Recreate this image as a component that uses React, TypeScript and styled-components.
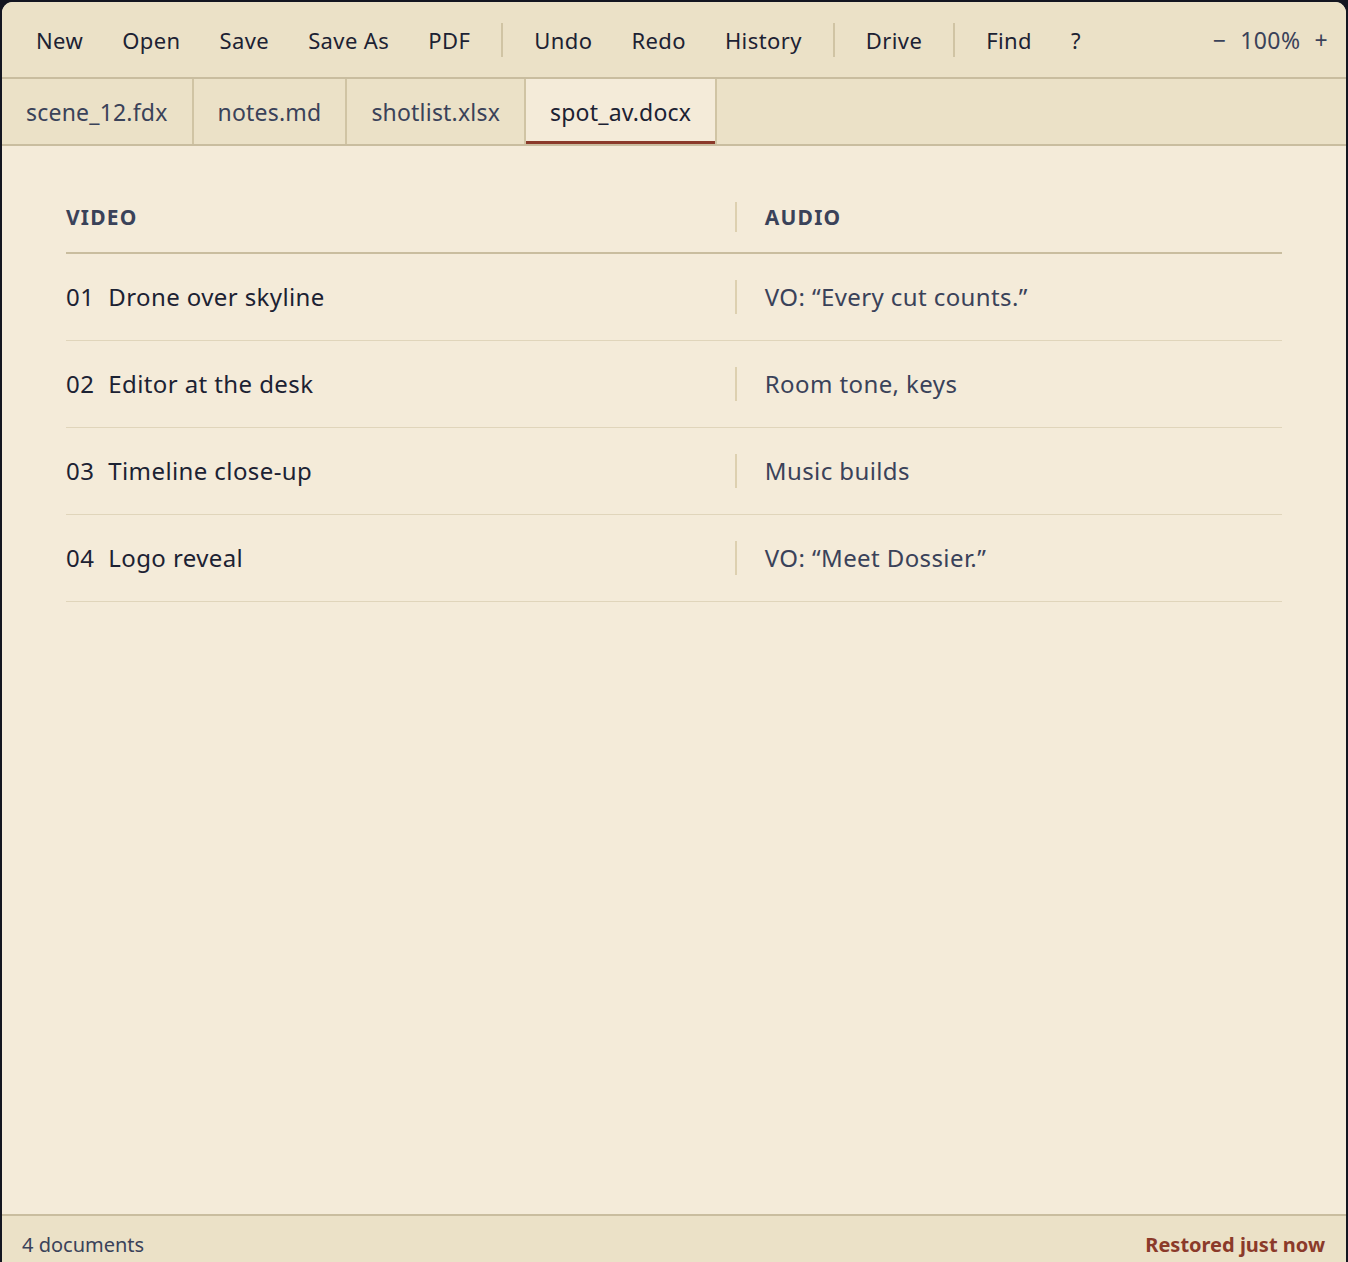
import React from "react";
import styled, { createGlobalStyle } from "styled-components";

const GlobalStyle = createGlobalStyle`
  html, body {
    margin: 0;
    padding: 0;
    background: #131520;
  }
  body {
    font-family: "Noto Sans", "Open Sans", sans-serif;
    -webkit-font-smoothing: antialiased;
  }
  * {
    box-sizing: border-box;
  }
`;

const Page = styled.div`
  padding: 2px 2px 0 2px;
  height: 1262px;
  overflow: hidden;
`;

const Window = styled.div`
  display: flex;
  flex-direction: column;
  height: 1270px;
  background: #f4ebd9;
  border-radius: 11px 11px 0 0;
  overflow: hidden;
`;

const Toolbar = styled.div`
  display: flex;
  align-items: center;
  height: 77px;
  padding: 0 18px 0 22px;
  gap: 15px;
  background: #ebe1c7;
  border-bottom: 2px solid #c9bd9f;
`;

const ToolButton = styled.button`
  padding: 0 12px;
  border: 0;
  background: none;
  font: inherit;
  font-size: 22px;
  letter-spacing: 0.4px;
  color: #1c2233;
  cursor: pointer;
`;

const Separator = styled.div`
  width: 2px;
  height: 34px;
  margin: 0 4px;
  background: #d0c4a4;
`;

const Zoom = styled.div`
  margin-left: auto;
  display: flex;
  align-items: center;
  gap: 14px;
  font-size: 23px;
  letter-spacing: 0.4px;
  color: #3a4259;
`;

const TabBar = styled.div`
  display: flex;
  height: 67px;
  background: #ebe1c7;
  border-bottom: 2px solid #c9bd9f;
`;

const Tab = styled.div<{ $active?: boolean }>`
  display: flex;
  align-items: center;
  padding: 0 24px;
  font-size: 23px;
  letter-spacing: 0.2px;
  color: ${(p) => (p.$active ? "#1c2233" : "#3a4259")};
  background: ${(p) => (p.$active ? "#f4ebd9" : "transparent")};
  border-right: 2px solid #d0c4a4;
  box-shadow: ${(p) => (p.$active ? "inset 0 -3px 0 #8b3a2a" : "none")};
`;

const Content = styled.main`
  flex: 1;
  padding: 56px 64px 0 64px;
`;

const Table = styled.div`
  display: grid;
  grid-template-columns: 55% 45%;
`;

const HeadCell = styled.div<{ $right?: boolean }>`
  height: 52px;
  line-height: 30px;
  padding: 0 0 20px ${(p) => (p.$right ? "30px" : "0")};
  font-size: 21px;
  font-weight: 700;
  letter-spacing: 1.2px;
  color: #3a4259;
  border-bottom: 2px solid #c9bd9f;
  position: relative;

  &::before {
    content: ${(p) => (p.$right ? "''" : "none")};
    position: absolute;
    left: 0;
    top: 0;
    width: 2px;
    height: 30px;
    background: #ddd0b0;
  }
`;

const Cell = styled.div<{ $right?: boolean }>`
  padding: 26px 0 26px ${(p) => (p.$right ? "30px" : "0")};
  line-height: 34px;
  font-size: 24px;
  letter-spacing: 0.4px;
  color: ${(p) => (p.$right ? "#3a4259" : "#1c2233")};
  border-bottom: 1px solid #e0d5bb;
  position: relative;

  &::before {
    content: ${(p) => (p.$right ? "''" : "none")};
    position: absolute;
    left: 0;
    top: 26px;
    width: 2px;
    height: 34px;
    background: #ddd0b0;
  }
`;

const Num = styled.span`
  margin-right: 14px;
`;

const Footer = styled.footer`
  display: flex;
  justify-content: space-between;
  align-items: flex-start;
  height: 58px;
  padding: 15px 21px 0 20px;
  font-size: 20px;
  color: #3a4259;
  background: #ebe1c7;
  border-top: 2px solid #c9bd9f;
`;

const Status = styled.span`
  font-weight: 700;
  color: #8b3a2a;
`;

const groups = [
  ["New", "Open", "Save", "Save As", "PDF"],
  ["Undo", "Redo", "History"],
  ["Drive"],
  ["Find", "?"],
];

const tabs = ["scene_12.fdx", "notes.md", "shotlist.xlsx", "spot_av.docx"];

const rows = [
  ["01", "Drone over skyline", "VO: \u201cEvery cut counts.\u201d"],
  ["02", "Editor at the desk", "Room tone, keys"],
  ["03", "Timeline close-up", "Music builds"],
  ["04", "Logo reveal", "VO: \u201cMeet Dossier.\u201d"],
];

export default function App() {
  return (
    <>
      <GlobalStyle />
      <Page>
        <Window>
          <Toolbar>
            {groups.map((g, i) => (
              <React.Fragment key={i}>
                {i > 0 && <Separator />}
                {g.map((label) => (
                  <ToolButton key={label}>{label}</ToolButton>
                ))}
              </React.Fragment>
            ))}
            <Zoom>
              <span>&minus;</span>
              <span>100%</span>
              <span>+</span>
            </Zoom>
          </Toolbar>
          <TabBar>
            {tabs.map((t) => (
              <Tab key={t} $active={t === "spot_av.docx"}>
                {t}
              </Tab>
            ))}
          </TabBar>
          <Content>
            <Table>
              <HeadCell>VIDEO</HeadCell>
              <HeadCell $right>AUDIO</HeadCell>
              {rows.map(([n, video, audio]) => (
                <React.Fragment key={n}>
                  <Cell>
                    <Num>{n}</Num>
                    {video}
                  </Cell>
                  <Cell $right>{audio}</Cell>
                </React.Fragment>
              ))}
            </Table>
          </Content>
          <Footer>
            <span>4 documents</span>
            <Status>Restored just now</Status>
          </Footer>
        </Window>
      </Page>
    </>
  );
}
